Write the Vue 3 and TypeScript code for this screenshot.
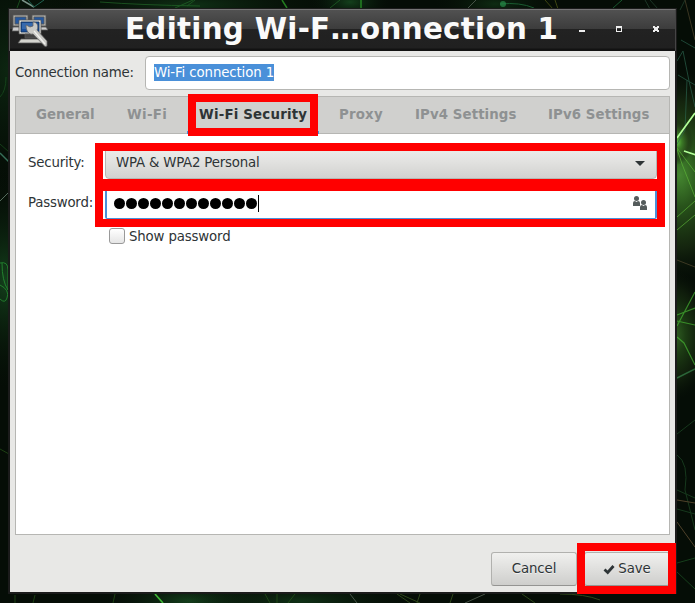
<script setup lang="ts">
import { ref } from 'vue'

const tabs: string[] = ['General', 'Wi-Fi', 'Wi-Fi Security', 'Proxy', 'IPv4 Settings', 'IPv6 Settings']
const activeTab = ref('Wi-Fi Security')
const passwordDots: number = 12
const showPassword = ref(false)
</script>

<template>
  <main class="desktop">
    <svg class="wallpaper" width="695" height="603" viewBox="0 0 695 603" aria-hidden="true">
      <defs>
        <radialGradient id="flare">
          <stop offset="0" stop-color="#6fd84c" />
          <stop offset=".3" stop-color="#408329" />
          <stop offset=".7" stop-color="#243d17" stop-opacity=".8" />
          <stop offset="1" stop-color="#101c0d" stop-opacity="0" />
        </radialGradient>
        <radialGradient id="haze">
          <stop offset="0" stop-color="#14401c" />
          <stop offset="1" stop-color="#071208" stop-opacity="0" />
        </radialGradient>
      </defs>
      <rect width="695" height="603" fill="#050d06" />
      <ellipse cx="10" cy="70" rx="90" ry="130" fill="url(#haze)" opacity=".5" />
      <ellipse cx="5" cy="280" rx="50" ry="110" fill="url(#haze)" />
      <ellipse cx="190" cy="5" rx="150" ry="25" fill="url(#haze)" opacity=".7" />
      <ellipse cx="350" cy="2" rx="40" ry="20" fill="url(#haze)" />
      <ellipse cx="495" cy="4" rx="60" ry="20" fill="url(#haze)" opacity=".6" />
      <ellipse cx="190" cy="601" rx="90" ry="25" fill="url(#haze)" />
      <ellipse cx="300" cy="601" rx="120" ry="22" fill="url(#haze)" opacity=".7" />
      <ellipse cx="680" cy="175" rx="65" ry="105" fill="url(#flare)" opacity=".6" />
      <ellipse cx="677" cy="142" rx="16" ry="23" fill="url(#flare)" opacity=".85" />
      <ellipse cx="675" cy="335" rx="35" ry="65" fill="url(#flare)" opacity=".4" />
      <g fill="none" stroke="#236c29" stroke-width="1" opacity=".65">
        <path d="M22 0l12 7" stroke="#b8d9cd" stroke-width="1.5" />
        <path d="M28 0l6 7 10-7" stroke="#2f8d78" />
        <path d="M100 2q40 3 100 4M175 8l18-8M187 6l8-6M330 8l10-8M20 0l-3 8" />
        <path d="M282 0l5 8M361 0v9" stroke="#32b52c" stroke-width="1.5" />
        <path d="M468 8l8-8" stroke="#657267" />
        <path d="M500 4q20-2 34 4M613 8l9-8" stroke="#238045" />
        <path d="M545 0l8 9M555 0l3 9" stroke="#5c6317" />
        <path d="M645 0l5 9M650 0l8 9M680 10l5-10" stroke="#294c37" />
        <path d="M0 97q6-6 6-20M0 144l9 8" stroke="#1b5422" />
        <path d="M0 153l9 9" stroke="#50a385" stroke-width="1.5" />
        <path d="M0 201l9-9" stroke="#809b8b" />
        <path d="M0 263q8-2 8 7v20q-6-9-6-27M0 285q10 5 7 13-2 6-7 1" stroke="#2da83b" />
        <path d="M0 449l9 5" stroke="#2b5c1b" />
        <path d="M677 61l6-10 6 30 6 26M681 40l14 8M678 75l17 10M687 80l-2 50-8 14" stroke="#2c6650" />
        <path d="M677 148l18 24M677 149l5 15 13 33M677 217l18-16M677 230l18-15" stroke="#5fb83a" />
        <path d="M685 0l10 40M677 260l18 7" stroke="#584c31" />
        <path d="M677 315l18-7M677 321l18 4M677 337l7 6 11 22M677 326l18-34" stroke="#49bc35" stroke-width="1.2" />
        <path d="M677 378l18-9" stroke="#3a8c50" stroke-width="1.5" />
        <path d="M677 434l18-14M677 455q12 8 8 35l10 40M677 490l18 8M677 509l18 5" stroke="#205029" />
        <path d="M677 522l18 25M677 500l18 3" stroke="#775e3e" />
        <path d="M677 563l18-5M677 572l18 17" stroke="#205a28" />
        <path d="M115 594l-2 9M265 594l5 9M277 594v9M288 603l7-9M15 595v8M35 595l-2 8" stroke="#285a19" />
        <path d="M350 594l7 9M465 603l20-9" stroke="#687668" />
        <path d="M397 594l13 9M400 594l20 9M417 603l3-9M450 603l3-9M522 594l13 9M560 594q25 0 40 6" stroke="#426425" />
      </g>
      <path d="M677 138l18-25M684 151l12 4" stroke="#b2ff98" stroke-width="1.7" fill="none" />
      <path d="M155 594l8 9" stroke="#3fba35" stroke-width="1.6" />
      <circle cx="503" cy="4" r="3" fill="#278b49" opacity=".7" />
    </svg>

    <section class="window">
      <header class="titlebar">
        <svg class="app-icon" width="37" height="34" viewBox="0 0 37 34" aria-hidden="true">
          <g stroke="#555" stroke-width=".8">
            <path d="M1 1h15v11H1zM20 1h14v11H20z" fill="#aaa9a4" />
            <path d="M3 3h11v7H3zM22 3h10v7H22z" fill="#2458a0" />
            <path d="M1 13h10v4H0zM26 13h8l2 3h-9z" fill="#ccc" />
            <path d="M7 6h22v14H7z" fill="#deded9" />
            <path d="M9 8h18v10H9z" fill="#194f9b" stroke="#102d57" />
            <path d="M13 20h11v4H13z" fill="#444" />
            <path d="M9 25h20l3 4H6z" fill="#d5d5cf" />
          </g>
          <path d="M10 9h16l-12 6h-4z" fill="#6290c8" opacity=".4" />
          <path d="M14 11l4 2 3-1V8c4 0 6 4 4 8l10 11v5l-2 .5L21 20c-4 1-7-3-7-9z" fill="#c9c9c5" stroke="#666" stroke-width=".8" />
          <path d="M22 17l11 13" stroke="#f1f1ed" stroke-width="1.2" />
        </svg>
        <h1>Editing Wi-F…onnection 1</h1>
        <svg class="controls" width="84" height="10" viewBox="0 0 84 10" aria-label="Window controls">
          <path d="M3 6h6v2H3z" fill="#eee" />
          <path d="M40 2h6v6h-6zM41 4v3h4V4z" fill="#eee" fill-rule="evenodd" />
          <path d="M77 2h2v1h2V2h2v2h-1v2h1v2h-2V7h-2v1h-2V6h1V4h-1z" fill="#eee" />
        </svg>
      </header>

      <div class="content">
        <div class="name-row">
          <span class="name-label">Connection name:</span>
          <div class="name-input"><span class="selection">Wi-Fi connection 1</span></div>
        </div>
        <section class="notebook">
          <nav class="tabs">
            <span v-for="tab in tabs" :key="tab" class="tab" :class="{ active: tab === activeTab }" @click="activeTab = tab">{{ tab }}</span>
          </nav>
          <div class="form">
            <div class="field security-field">
              <span class="label">Security:</span>
              <div class="combo">
                <span>WPA &amp; WPA2 Personal</span>
                <svg width="12" height="6" viewBox="0 0 12 6"><path d="M1 0h10L6 5z" fill="#2e3436" /></svg>
              </div>
            </div>
            <div class="field">
              <span class="label">Password:</span>
              <div class="password">
                <div class="dots"><i v-for="n in passwordDots" :key="n"></i><b></b></div>
                <svg width="16" height="16" viewBox="0 0 16 16" fill="#555c5c">
                  <circle cx="4.5" cy="2.5" r="2.5" /><path d="M1 10V7q0-2 2-2l1.5 1L6 5q2 0 2 2v3z" />
                  <circle cx="11.5" cy="6.5" r="2.5" /><path d="M8 14v-3q0-2 2-2l1.5 1 1.5-1q2 0 2 2v3z" />
                </svg>
              </div>
            </div>
            <div class="check-row" @click="showPassword = !showPassword">
              <span class="checkbox"></span><span class="check-label">Show password</span>
            </div>
          </div>
        </section>
        <footer class="actions">
          <button class="cancel">Cancel</button>
          <button class="save">
            <svg width="12" height="11" viewBox="0 0 12 11"><path d="M1.5 5.5l3.2 3L10.5 2" fill="none" stroke="#2e3436" stroke-width="2.8" /></svg>
            <span>Save</span>
          </button>
        </footer>
      </div>
    </section>
    <div class="mark mark-tab"></div>
    <div class="mark mark-security"></div>
    <div class="mark mark-password"></div>
    <div class="mark mark-save"></div>
  </main>
</template>

<style>
body { overflow: hidden; }
</style>

<style scoped>
* { box-sizing: border-box; }
.desktop { position: relative; width: 695px; height: 603px; padding: 8px 0 0 8px; overflow: hidden; font: 13.33px/18px "DejaVu Sans", sans-serif; letter-spacing: -0.2px; color: #2e3436; }
.wallpaper { position: absolute; inset: 0; }
.window { position: relative; display: flex; flex-direction: column; width: 669px; height: 586px; border: solid #1b1b1b; border-width: 1px 2px 2px; background: #e8e8e6; }
.titlebar { display: flex; align-items: flex-start; height: 42px; margin: 0 -1px; padding-left: 3px; border-top: 1px solid #757575; border-left: 1px solid #555; border-right: 1px solid #454545; background: linear-gradient(#515151 0, #3c3c3c 19px, #222 19px, #202020 38px, #121212 39px); }
.app-icon { flex: none; margin: 4px 0 0 -1px; }
h1 { flex: none; width: 434px; margin: 0 0 0 76px; font-size: 29.33px; line-height: 38px; letter-spacing: .3px; color: #fafafa; white-space: nowrap; }
.controls { margin: 14px 0 0 17px; }
.content { flex: 1; padding: 5px 5px 0; }
.name-row { display: flex; align-items: center; height: 34px; }
.name-label { width: 130px; }
.name-input { flex: 1; height: 34px; padding: 7px 8px; border: 1px solid #b6b6b3; border-radius: 4px; background: #fff; }
.selection { display: block; width: 120px; height: 17px; line-height: 17px; letter-spacing: -.12px; white-space: nowrap; background: #4a90d9; color: #fff; }
.notebook { height: 439px; margin-top: 6px; border: 1px solid #b6b6b3; background: #fff; }
.tabs { display: flex; gap: 32px; height: 37px; padding: 0 20px; border-bottom: 1px solid #b6b6b3; background: #d0d0ce; }
.tab { position: relative; flex: none; padding-top: 9px; font-weight: bold; letter-spacing: .1px; color: #8e9192; white-space: nowrap; }
.tab:nth-child(1) { width: 59px; letter-spacing: 0; }
.tab:nth-child(2) { width: 40px; letter-spacing: .35px; }
.tab:nth-child(3) { width: 108px; letter-spacing: .2px; }
.tab:nth-child(4) { width: 44px; letter-spacing: .2px; }
.tab:nth-child(5) { width: 101px; }
.tab:nth-child(6) { width: 101px; }
.active { color: #2e3436; }
.active::after { content: ""; position: absolute; left: -12px; right: -12px; bottom: -1px; height: 3px; background: #4a90d9; }
.form { padding: 10px 12px 0; }
.field { display: flex; height: 36px; }
.security-field { margin-bottom: 4px; }
.label { width: 77px; padding-top: 10px; white-space: nowrap; }
.combo { display: flex; justify-content: space-between; flex: none; width: 552px; height: 35px; padding: 9px 10px 0 10px; border: 1px solid #b6b6b3; border-radius: 4px; background: linear-gradient(#efefed, #e5e5e3 40%, #d2d2d0); }
.combo svg { margin-top: 7px; }
.password { display: flex; flex: none; justify-content: space-between; width: 552px; height: 35px; padding: 10px 7px 0 7px; border: 2px solid #4a90d9; border-bottom-width: 1px; border-radius: 4px 4px 2px 2px; background: #fff; }
.dots { display: flex; gap: 1px; height: 17px; align-items: center; margin-top: -1px; }
.dots i { width: 11px; height: 11px; border-radius: 50%; background: #000; }
.dots b { width: 1px; height: 17px; background: #000; }
.check-row { display: flex; gap: 4px; height: 18px; margin: 8px 0 0 81px; }
.check-label { letter-spacing: -.15px; }
.checkbox { width: 16px; height: 16px; border: 1px solid #999; border-radius: 3px; background: linear-gradient(#fff, #e5e5e5); }
.actions { display: flex; justify-content: flex-end; gap: 7px; margin-top: 17px; }
button { display: flex; align-items: center; justify-content: center; width: 86px; height: 34px; padding: 0; border: 1px solid #b1b1ae; border-bottom-color: #949492; border-radius: 3px; background: linear-gradient(#f0f0ee, #e6e6e4 30%, #cececc); font: inherit; letter-spacing: -.1px; color: #2e3436; text-shadow: 0 1px #fff9; }
.save { gap: 3px; }
.mark { position: absolute; border: 8px solid #f00; }
.mark-tab { left: 188px; top: 94px; width: 130px; height: 42px; }
.mark-security { left: 95px; top: 143px; width: 570px; height: 44px; }
.mark-password { left: 95px; top: 183px; width: 570px; height: 44px; }
.mark-save { left: 577px; top: 543px; width: 99px; height: 51px; }
</style>
